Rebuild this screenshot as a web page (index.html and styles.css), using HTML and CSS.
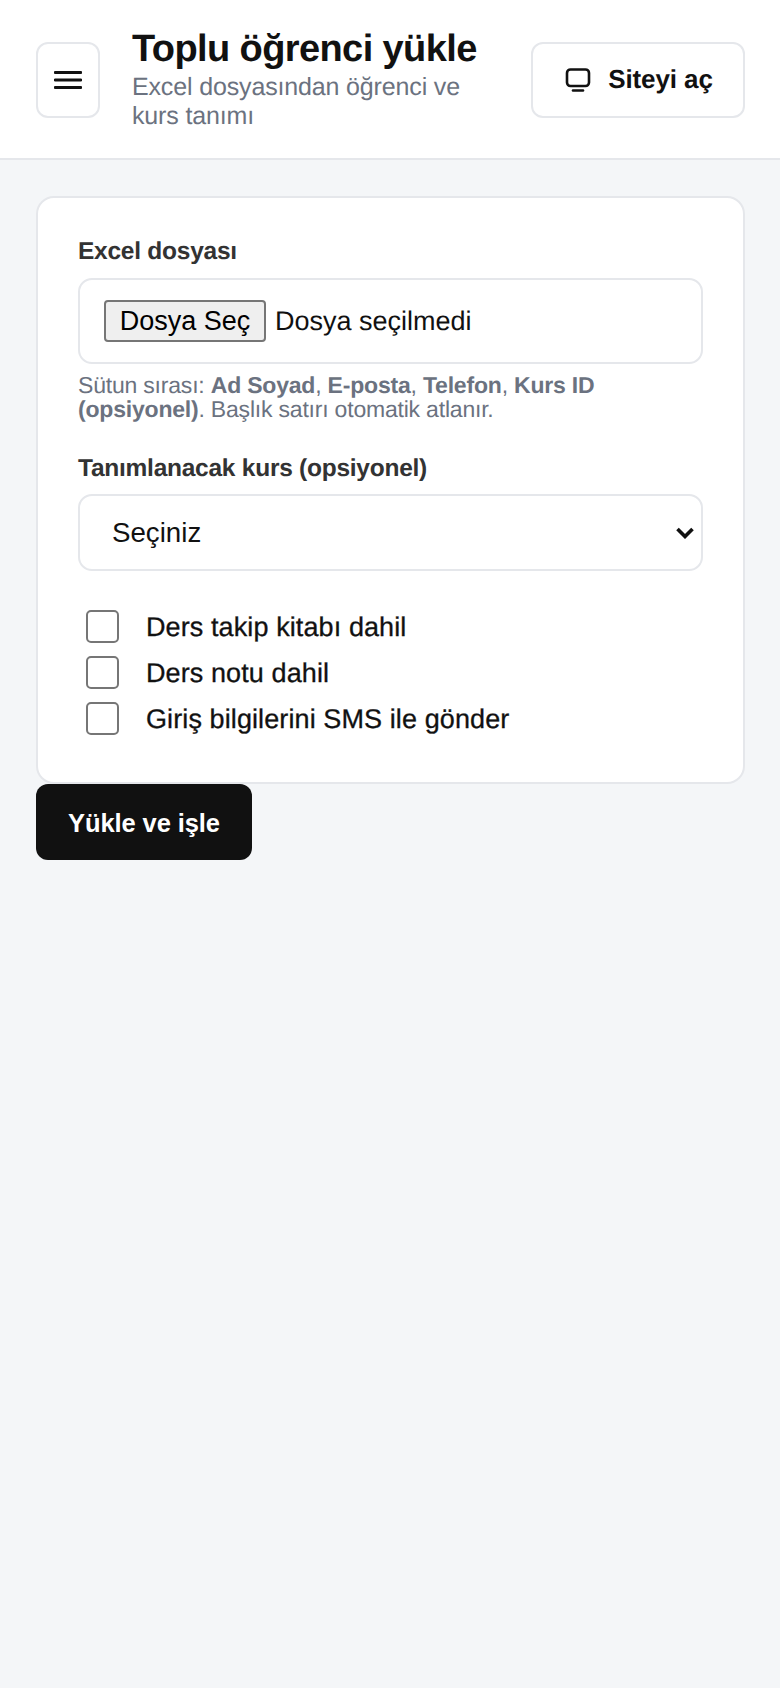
FILE: index.html
```html
<!DOCTYPE html>
<html lang="tr">
<head>
<meta charset="utf-8">
<title>Toplu öğrenci yükle</title>
<link rel="stylesheet" href="styles.css">
</head>
<body>
<header class="topbar">
  <button class="menu-btn" type="button" aria-label="Menü">
    <svg class="menu-icon" viewBox="0 0 28 20" width="28" height="20"><path d="M1 2.5h26M1 10h26M1 17.5h26"/></svg>
  </button>
  <div class="heading">
    <h1 class="title">Toplu öğrenci yükle</h1>
    <p class="subtitle">Excel dosyasından öğrenci ve kurs tanımı</p>
  </div>
  <a class="site-btn" href="#">
    <svg class="site-icon" viewBox="0 0 26 24" width="26" height="24"><rect x="2" y="1.5" width="22" height="16.5" rx="3.5"/><path d="M8 22.5h10"/></svg>
    <span class="site-label">Siteyi aç</span>
  </a>
</header>
<main class="content">
  <form class="card">
    <label class="field-label">Excel dosyası</label>
    <div class="file-box">
      <button class="file-btn" type="button">Dosya Seç</button>
      <span class="file-name">Dosya seçilmedi</span>
    </div>
    <p class="hint">Sütun sırası: <strong>Ad Soyad</strong>, <strong>E-posta</strong>, <strong>Telefon</strong>, <strong>Kurs ID (opsiyonel)</strong>. Başlık satırı otomatik atlanır.</p>
    <label class="field-label second">Tanımlanacak kurs (opsiyonel)</label>
    <select class="select"><option>Seçiniz</option></select>
    <div class="checks">
      <label class="check"><input type="checkbox"><span class="check-text">Ders takip kitabı dahil</span></label>
      <label class="check"><input type="checkbox"><span class="check-text">Ders notu dahil</span></label>
      <label class="check"><input type="checkbox"><span class="check-text">Giriş bilgilerini SMS ile gönder</span></label>
    </div>
  </form>
  <button class="submit" type="button">Yükle ve işle</button>
</main>
</body>
</html>
```
FILE: styles.css
```css
* { box-sizing: border-box; }
html, body { margin: 0; min-height: 100%; }
body {
  min-height: 1688px;
  background: #f4f6f8;
  color: #111;
  font-family: "Liberation Sans", Arial, sans-serif;
  text-rendering: geometricPrecision;
}
.topbar {
  display: flex;
  align-items: center;
  gap: 32px;
  height: 160px;
  padding: 2px 35px 0 36px;
  background: #fff;
  border-bottom: 2px solid #e5e7eb;
}
.menu-btn {
  flex: none;
  display: flex;
  align-items: center;
  justify-content: center;
  width: 64px;
  height: 76px;
  padding: 0;
  background: #fff;
  border: 2px solid #e5e7eb;
  border-radius: 12px;
}
.menu-icon { fill: none; stroke: #111; stroke-width: 2.8; stroke-linecap: round; }
.heading { flex: 1; min-width: 0; }
.title {
  margin: -2px 0 0;
  font-size: 38px;
  line-height: 44px;
  font-weight: 700;
  letter-spacing: -0.6px;
}
.subtitle {
  margin: 2px 0 0;
  font-size: 25px;
  line-height: 29px;
  letter-spacing: -0.15px;
  color: #6b7280;
}
.site-btn {
  flex: none;
  display: flex;
  align-items: center;
  justify-content: center;
  gap: 17px;
  width: 214px;
  height: 76px;
  padding-left: 2px;
  background: #fff;
  border: 2px solid #e5e7eb;
  border-radius: 12px;
  color: #111;
  font-size: 26px;
  font-weight: 700;
  letter-spacing: -0.1px;
  text-decoration: none;
}
.site-label { margin-top: -2px; }
.site-icon { fill: none; stroke: #111; stroke-width: 2.6; stroke-linecap: round; }
.content { padding: 36px 35px 0 36px; }
.card {
  display: flex;
  flex-direction: column;
  align-items: stretch;
  height: 588px;
  padding: 40px 40px 0;
  background: #fff;
  border: 2px solid #e5e7eb;
  border-radius: 18px;
}
.field-label {
  font-size: 24.5px;
  line-height: 28px;
  font-weight: 700;
  letter-spacing: -0.25px;
  color: #333;
}
.second { margin-top: 34px; }
.file-box {
  display: flex;
  align-items: center;
  height: 86px;
  margin-top: 12px;
  padding: 0 24px;
  border: 2px solid #e5e7eb;
  border-radius: 14px;
  font-size: 27px;
}
.file-btn {
  flex: none;
  width: 162px;
  height: 42px;
  margin-right: 9px;
  padding: 0;
  background: #efefef;
  border: 2px solid #767676;
  border-radius: 4px;
  color: #000;
  font: inherit;
}
.hint {
  margin: 9px 0 0;
  font-size: 23px;
  line-height: 24px;
  letter-spacing: -0.2px;
  color: #6b7280;
}
.select {
  appearance: none;
  height: 77px;
  margin-top: 11px;
  padding: 0 32px;
  background: #fff url("data:image/svg+xml,%3Csvg xmlns='http://www.w3.org/2000/svg' viewBox='0 0 18 12'%3E%3Cpath d='M1.5 2l7.5 7.5 7.5-7.5' fill='none' stroke='%23111' stroke-width='3.6'/%3E%3C/svg%3E") no-repeat right 7px center / 18px 12px;
  border: 2px solid #e5e7eb;
  border-radius: 14px;
  color: #111;
  font-family: inherit;
  font-size: 27.7px;
}
.checks {
  display: flex;
  flex-direction: column;
  gap: 13px;
  margin-top: 39px;
  padding-left: 8px;
}
.check {
  display: flex;
  align-items: center;
  gap: 27px;
  font-size: 27px;
  line-height: 31px;
  letter-spacing: 0.1px;
  -webkit-text-stroke: 0.3px #111;
}
.check-text { padding-top: 2px; }
.check input {
  appearance: none;
  flex: none;
  width: 33px;
  height: 33px;
  margin: 0;
  background: #fff;
  border: 2px solid #767676;
  border-radius: 5px;
}
.submit {
  display: block;
  width: 216px;
  height: 76px;
  padding: 2px 0 0;
  background: #111;
  border: 0;
  border-radius: 12px;
  color: #fff;
  font-family: inherit;
  font-size: 25.5px;
  font-weight: 700;
  letter-spacing: -0.1px;
}
```
